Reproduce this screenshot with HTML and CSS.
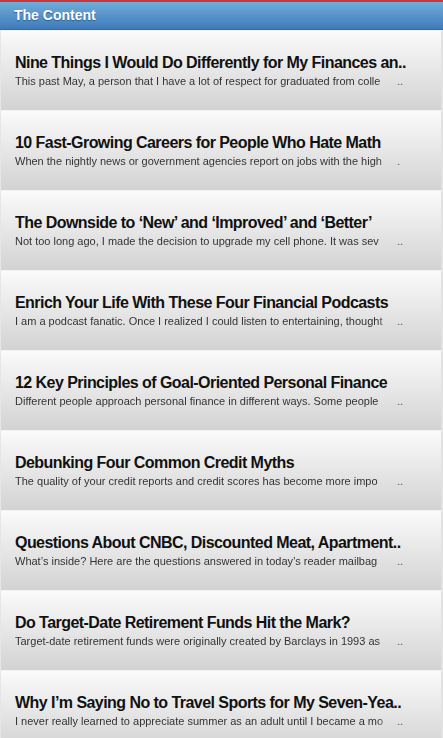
FILE: index.html
```html
<!DOCTYPE html>
<html lang="en">
<head>
    <meta charset="UTF-8">
    <meta name="viewport" content="width=device-width, initial-scale=1.0">
    <title>The Content</title>
    <link rel="stylesheet" href="styles.css">
</head>
<body>
    <header class="top-bar">
        <h1>The Content</h1>
    </header>

    <ul class="post-list">
        <li class="post">
            <h2>Nine Things I Would Do Differently for My Finances an..</h2>
            <p><span class="excerpt">This past May, a person that I have a lot of respect for graduated from colle</span><span class="more">..</span></p>
        </li>
        <li class="post">
            <h2>10 Fast-Growing Careers for People Who Hate Math</h2>
            <p><span class="excerpt">When the nightly news or government agencies report on jobs with the high</span><span class="more">.</span></p>
        </li>
        <li class="post">
            <h2>The Downside to ‘New’ and ‘Improved’ and ‘Better’</h2>
            <p><span class="excerpt">Not too long ago, I made the decision to upgrade my cell phone. It was sev</span><span class="more">..</span></p>
        </li>
        <li class="post">
            <h2>Enrich Your Life With These Four Financial Podcasts</h2>
            <p><span class="excerpt">I am a podcast fanatic. Once I realized I could listen to entertaining, thought</span><span class="more">..</span></p>
        </li>
        <li class="post">
            <h2>12 Key Principles of Goal-Oriented Personal Finance</h2>
            <p><span class="excerpt">Different people approach personal finance in different ways. Some people</span><span class="more">..</span></p>
        </li>
        <li class="post">
            <h2>Debunking Four Common Credit Myths</h2>
            <p><span class="excerpt">The quality of your credit reports and credit scores has become more impo</span><span class="more">..</span></p>
        </li>
        <li class="post">
            <h2>Questions About CNBC, Discounted Meat, Apartment..</h2>
            <p><span class="excerpt">What’s inside? Here are the questions answered in today’s reader mailbag</span><span class="more">..</span></p>
        </li>
        <li class="post">
            <h2>Do Target-Date Retirement Funds Hit the Mark?</h2>
            <p><span class="excerpt">Target-date retirement funds were originally created by Barclays in 1993 as</span><span class="more">..</span></p>
        </li>
        <li class="post">
            <h2>Why I’m Saying No to Travel Sports for My Seven-Yea..</h2>
            <p><span class="excerpt">I never really learned to appreciate summer as an adult until I became a mo</span><span class="more">..</span></p>
        </li>
    </ul>
</body>
</html>
```

FILE: styles.css
```css
body {
    margin: 0;
    font-family: 'Liberation Sans', Arial, sans-serif;
    background-color: #e4e4e4;
    color: #111;
    overflow: hidden;
}

.top-bar {
    border-top: 2px solid #c8383c;
    height: 27px;
    background: linear-gradient(#70acd9, #3f7bba);
    border-bottom: 1px solid #37689c;
}

.top-bar h1 {
    margin: 0;
    padding-left: 14px;
    font-size: 14px;
    line-height: 27px;
    color: #fff;
    text-shadow: 0 1px 1px #2d5d8f;
}

.post-list {
    list-style: none;
    margin: 0;
    padding: 0;
}

.post {
    height: 80px;
    box-sizing: border-box;
    padding: 23px 0 0 14px;
    border-top: 1px solid #f4f4f4;
    border-left: 1px solid #e6e6e6;
    border-right: 2px solid #e2e2e2;
    background: linear-gradient(#fafafa, #d3d3d3);
    overflow: hidden;
}

.post h2 {
    margin: 0;
    font-size: 16px;
    line-height: 18px;
    font-weight: bold;
    letter-spacing: -0.55px;
    color: #111;
    white-space: nowrap;
}

.post p {
    display: flex;
    margin: 2px 0 0;
    font-size: 11px;
    line-height: 14px;
    color: #333;
}

.excerpt {
    width: 374px;
    white-space: nowrap;
    -webkit-mask-image: linear-gradient(to right, #000 362px, rgba(0, 0, 0, 0.35) 374px);
    mask-image: linear-gradient(to right, #000 362px, rgba(0, 0, 0, 0.35) 374px);
}

.more {
    margin-left: 8px;
    color: #555;
}
```
